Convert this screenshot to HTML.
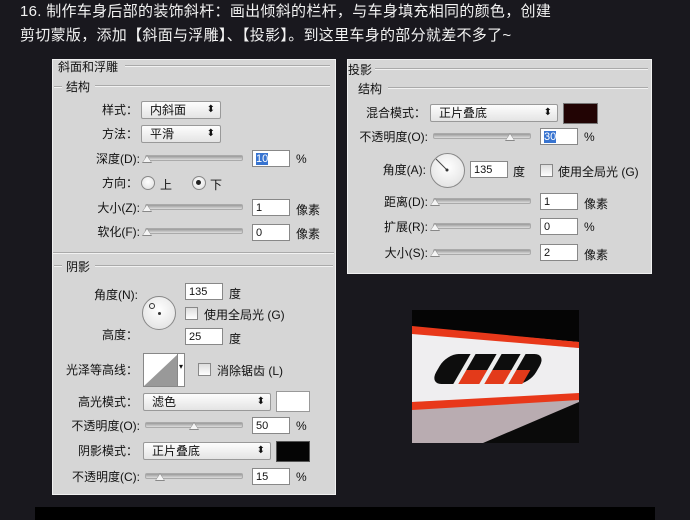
<!DOCTYPE html><html><head><meta charset="utf-8"><style>
body{margin:0;width:690px;height:520px;background:#19181e;overflow:hidden;position:relative;font-family:"Liberation Sans","Noto Sans CJK SC",sans-serif;font-size:12px;color:#111}
.a{position:absolute;white-space:nowrap}
.p{position:absolute;background:#d6d6d6;border:1px solid #f0f0f0}
.l{position:absolute;text-align:right;line-height:14px}
.in{position:absolute;background:#fff;border:1px solid #888;height:17px;line-height:17px;padding-left:3px;box-sizing:border-box;font-size:11px}
.sel{position:absolute;background:linear-gradient(#fdfdfd,#e4e4e4);border:1px solid #999;border-radius:2px;height:18px;line-height:16px;padding-left:8px;box-sizing:border-box}
.sel:after{content:"⬍";position:absolute;right:5px;top:0;font-size:10px}
.tr{position:absolute;height:4px;background:linear-gradient(#999,#ddd);border:1px solid #aaa;border-radius:2px}
.th{position:absolute;width:0;height:0;border-left:5px solid transparent;border-right:5px solid transparent;border-bottom:8px solid #888}
.th:after{content:"";position:absolute;left:-4px;top:1px;border-left:4px solid transparent;border-right:4px solid transparent;border-bottom:6px solid #f4f4f4}
.hr{position:absolute;height:1px;background:#aaa;border-bottom:1px solid #f2f2f2}
.cb{position:absolute;width:11px;height:11px;border:1px solid #888;background:linear-gradient(#ddd,#fff)}
.dial{position:absolute;border-radius:50%;border:1px solid #888;background:radial-gradient(circle at 50% 40%,#fff,#ddd)}
</style></head><body>
<div class="a" style="left:20px;top:0;color:#f2f2f2;font-size:15px;line-height:24px;letter-spacing:0.3px">16. 制作车身后部的装饰斜杆：画出倾斜的栏杆，与车身填充相同的颜色，创建<br>剪切蒙版，添加【斜面与浮雕】、【投影】。到这里车身的部分就差不多了~</div>

<div class="p" style="left:52px;top:59px;width:282px;height:434px"></div>
<div class="a" style="left:58px;top:58px">斜面和浮雕</div><div class="hr" style="left:125px;top:65px;width:205px"></div>
<div class="a" style="left:66px;top:78px">结构</div><div class="hr" style="left:95px;top:85px;width:235px"></div>
<div class="hr" style="left:54px;top:86px;width:8px"></div>
<div class="l" style="left:60px;width:78px;top:103px">样式：</div><div class="sel" style="left:141px;top:101px;width:80px">内斜面</div>
<div class="l" style="left:60px;width:78px;top:127px">方法：</div><div class="sel" style="left:141px;top:125px;width:80px">平滑</div>
<div class="l" style="left:60px;width:80px;top:152px">深度(D):</div><div class="tr" style="left:145px;top:155px;width:96px"></div><div class="th" style="left:142px;top:155px"></div>
<div class="in" style="left:252px;top:150px;width:38px"><span style="background:#3874d0;color:#fff">10</span></div><div class="a" style="left:296px;top:152px">%</div>
<div class="l" style="left:60px;width:78px;top:176px">方向：</div>
<div class="dial" style="left:141px;top:176px;width:12px;height:12px"></div><div class="a" style="left:160px;top:176px">上</div>
<div class="dial" style="left:192px;top:176px;width:12px;height:12px"></div><div class="a" style="left:196px;top:180px;width:5px;height:5px;border-radius:50%;background:#222"></div><div class="a" style="left:210px;top:176px">下</div>
<div class="l" style="left:60px;width:80px;top:201px">大小(Z):</div><div class="tr" style="left:145px;top:204px;width:96px"></div><div class="th" style="left:142px;top:204px"></div>
<div class="in" style="left:252px;top:199px;width:38px">1</div><div class="a" style="left:296px;top:201px">像素</div>
<div class="l" style="left:60px;width:80px;top:225px">软化(F):</div><div class="tr" style="left:145px;top:228px;width:96px"></div><div class="th" style="left:142px;top:228px"></div>
<div class="in" style="left:252px;top:224px;width:38px">0</div><div class="a" style="left:296px;top:225px">像素</div>
<div class="hr" style="left:53px;top:252px;width:281px"></div>
<div class="a" style="left:66px;top:258px">阴影</div><div class="hr" style="left:95px;top:265px;width:238px"></div><div class="hr" style="left:54px;top:265px;width:8px"></div>
<div class="l" style="left:60px;width:78px;top:288px">角度(N):</div>
<div class="dial" style="left:142px;top:296px;width:32px;height:32px"></div><div class="a" style="left:158px;top:312px;width:3px;height:3px;background:#333;border-radius:50%"></div><div class="a" style="left:149px;top:303px;width:4px;height:4px;border:1px solid #333;border-radius:50%"></div>
<div class="in" style="left:185px;top:283px;width:38px">135</div><div class="a" style="left:229px;top:285px">度</div>
<div class="cb" style="left:185px;top:307px"></div><div class="a" style="left:204px;top:306px">使用全局光 (G)</div>
<div class="l" style="left:60px;width:78px;top:328px">高度：</div>
<div class="in" style="left:185px;top:328px;width:38px">25</div><div class="a" style="left:229px;top:330px">度</div>
<div class="l" style="left:50px;width:88px;top:363px">光泽等高线：</div>
<div class="a" style="left:143px;top:353px;width:40px;height:32px;border:1px solid #888;background:#fff"><svg width="34" height="32" style="position:absolute;left:0;top:0"><polygon points="0,32 34,0 34,32" fill="#999"/></svg><div style="position:absolute;right:0;top:0;width:6px;height:32px;border-left:1px solid #888;font-size:8px;line-height:26px;text-align:center">▾</div></div>
<div class="cb" style="left:198px;top:363px"></div><div class="a" style="left:217px;top:362px">消除锯齿 (L)</div>
<div class="l" style="left:50px;width:88px;top:395px">高光模式：</div><div class="sel" style="left:143px;top:393px;width:128px">滤色</div>
<div class="a" style="left:276px;top:391px;width:32px;height:19px;border:1px solid #999;background:#fff"></div>
<div class="l" style="left:50px;width:90px;top:419px">不透明度(O):</div><div class="tr" style="left:145px;top:422px;width:96px"></div><div class="th" style="left:189px;top:422px"></div>
<div class="in" style="left:252px;top:417px;width:38px">50</div><div class="a" style="left:296px;top:419px">%</div>
<div class="l" style="left:50px;width:88px;top:444px">阴影模式：</div><div class="sel" style="left:143px;top:442px;width:128px">正片叠底</div>
<div class="a" style="left:276px;top:441px;width:32px;height:19px;border:1px solid #555;background:#050505"></div>
<div class="l" style="left:50px;width:90px;top:470px">不透明度(C):</div><div class="tr" style="left:145px;top:473px;width:96px"></div><div class="th" style="left:155px;top:473px"></div>
<div class="in" style="left:252px;top:468px;width:38px">15</div><div class="a" style="left:296px;top:470px">%</div>

<div class="p" style="left:347px;top:59px;width:303px;height:213px"></div>
<div class="a" style="left:348px;top:61px">投影</div><div class="hr" style="left:375px;top:68px;width:273px"></div>
<div class="a" style="left:358px;top:80px">结构</div><div class="hr" style="left:388px;top:87px;width:260px"></div>
<div class="l" style="left:350px;width:76px;top:106px">混合模式：</div><div class="sel" style="left:430px;top:104px;width:128px">正片叠底</div>
<div class="a" style="left:563px;top:103px;width:33px;height:19px;border:1px solid #777;background:#220404"></div>
<div class="l" style="left:350px;width:78px;top:130px">不透明度(O):</div><div class="tr" style="left:433px;top:133px;width:96px"></div><div class="th" style="left:505px;top:133px"></div>
<div class="in" style="left:540px;top:128px;width:38px"><span style="background:#3874d0;color:#fff">30</span></div><div class="a" style="left:584px;top:130px">%</div>
<div class="l" style="left:350px;width:76px;top:163px">角度(A):</div>
<div class="dial" style="left:430px;top:153px;width:33px;height:33px"></div>
<svg class="a" style="left:430px;top:153px" width="35" height="35"><line x1="17" y1="17" x2="6" y2="6" stroke="#444"/><circle cx="17" cy="17" r="1.5" fill="#333"/></svg>
<div class="in" style="left:470px;top:161px;width:38px">135</div><div class="a" style="left:513px;top:163px">度</div>
<div class="cb" style="left:540px;top:164px"></div><div class="a" style="left:558px;top:163px">使用全局光 (G)</div>
<div class="l" style="left:350px;width:78px;top:195px">距离(D):</div><div class="tr" style="left:433px;top:198px;width:96px"></div><div class="th" style="left:430px;top:198px"></div>
<div class="in" style="left:540px;top:193px;width:38px">1</div><div class="a" style="left:584px;top:195px">像素</div>
<div class="l" style="left:350px;width:78px;top:220px">扩展(R):</div><div class="tr" style="left:433px;top:223px;width:96px"></div><div class="th" style="left:430px;top:223px"></div>
<div class="in" style="left:540px;top:218px;width:38px">0</div><div class="a" style="left:584px;top:220px">%</div>
<div class="l" style="left:350px;width:78px;top:246px">大小(S):</div><div class="tr" style="left:433px;top:249px;width:96px"></div><div class="th" style="left:430px;top:249px"></div>
<div class="in" style="left:540px;top:244px;width:38px">2</div><div class="a" style="left:584px;top:246px">像素</div>

<svg class="a" style="left:412px;top:310px" width="167" height="133" viewBox="0 0 167 133">
<rect width="167" height="133" fill="#050505"/>
<polygon points="0,17 167,32 167,133 0,133" fill="#b9acb1"/>
<polygon points="0,23 167,38 167,84 0,92" fill="#efeef0"/>
<polygon points="0,16 167,32 167,38 0,24" fill="#e8381a"/>
<polygon points="0,92 167,83 167,90 0,100" fill="#e8381a"/>
<polygon points="71,133 167,92 167,133" fill="#0a0a0a"/>
<g transform="skewX(-30)"><rect x="60" y="44" width="100" height="30" rx="12" fill="#0d0d0d"/><rect x="88" y="60" width="65" height="14" fill="#e33a1a"/><rect x="84" y="41" width="5" height="36" fill="#eee"/><rect x="110" y="41" width="5" height="36" fill="#eee"/><rect x="134" y="41" width="5" height="36" fill="#eee"/></g>
</svg>
<div class="a" style="left:35px;top:507px;width:620px;height:13px;background:#000"></div>
</body></html>
